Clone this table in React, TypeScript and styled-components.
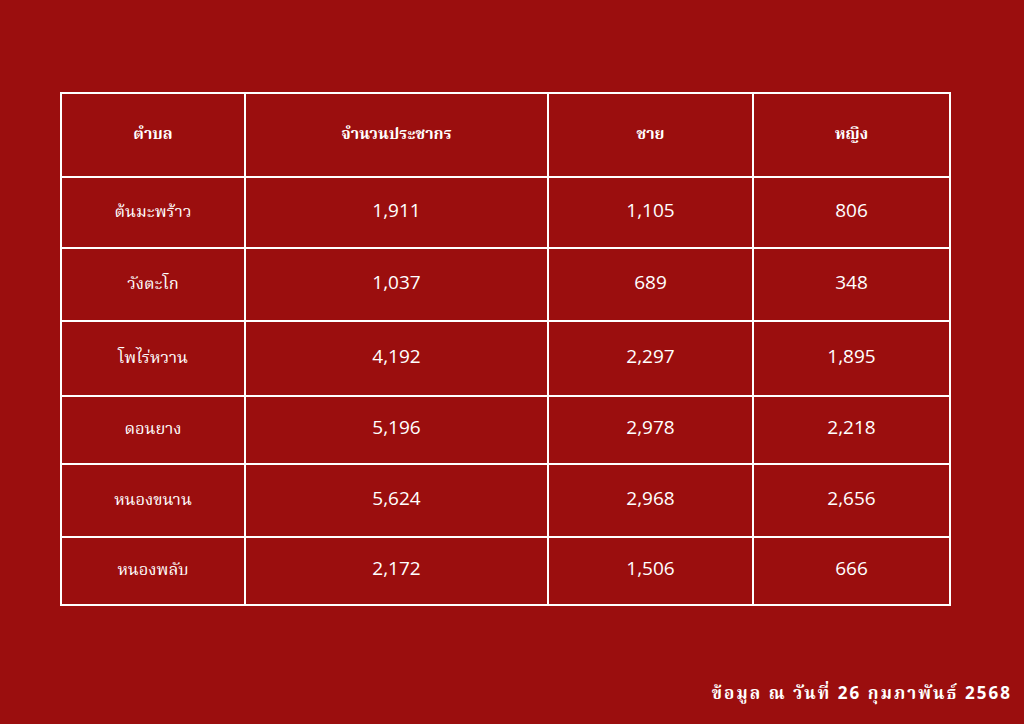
import React from 'react'
import styled, { createGlobalStyle } from 'styled-components'

const GlobalStyle = createGlobalStyle`
  html, body {
    margin: 0;
    padding: 0;
    background: #9b0e0e;
  }
  body {
    font-family: "Open Sans", "Noto Serif Thai", "Norasi", "Loma", "Garuda", "Tlwg Typo", "Noto Sans", serif;
    color: #ffffff;
  }
`

interface Row {
  name: string
  total: string
  male: string
  female: string
  height: number
}

const rows: Row[] = [
  { name: 'ต้นมะพร้าว', total: '1,911', male: '1,105', female: '806', height: 71 },
  { name: 'วังตะโก', total: '1,037', male: '689', female: '348', height: 73 },
  { name: 'โพไร่หวาน', total: '4,192', male: '2,297', female: '1,895', height: 75 },
  { name: 'ดอนยาง', total: '5,196', male: '2,978', female: '2,218', height: 68 },
  { name: 'หนองขนาน', total: '5,624', male: '2,968', female: '2,656', height: 73 },
  { name: 'หนองพลับ', total: '2,172', male: '1,506', female: '666', height: 68 },
]

const Page = styled.div`
  width: 1024px;
  height: 724px;
  box-sizing: border-box;
  padding: 92px 0 0 60px;
  display: flex;
  flex-direction: column;
`

const Table = styled.table`
  width: 881px;
  border-collapse: collapse;
  table-layout: fixed;
`

const HeadCell = styled.th<{ $w: number }>`
  width: ${p => p.$w}px;
  height: 82px;
  border: 2px solid #ffffff;
  font-size: 16px;
  font-weight: 700;
  text-align: center;
  vertical-align: middle;
  padding: 0;
`

const BodyRow = styled.tr<{ $h: number }>`
  height: ${p => p.$h}px;
`

const Cell = styled.td<{ $name?: boolean }>`
  border: 2px solid #ffffff;
  font-size: ${p => (p.$name ? '16.5px' : '19px')};
  text-align: center;
  vertical-align: middle;
  padding: ${p => (p.$name ? '0 0 1px' : '0 0 6px')};
`

const Footer = styled.div`
  margin-top: auto;
  align-self: flex-end;
  padding: 0 12px 16px 0;
  font-size: 17px;
  font-weight: 700;
  letter-spacing: 2.05px;
`

const App = () => (
  <>
    <GlobalStyle />
    <Page>
      <Table>
        <thead>
          <tr>
            <HeadCell $w={182}>ตำบล</HeadCell>
            <HeadCell $w={301}>จำนวนประชากร</HeadCell>
            <HeadCell $w={203}>ชาย</HeadCell>
            <HeadCell $w={195}>หญิง</HeadCell>
          </tr>
        </thead>
        <tbody>
          {rows.map(r => (
            <BodyRow key={r.name} $h={r.height}>
              <Cell $name>{r.name}</Cell>
              <Cell>{r.total}</Cell>
              <Cell>{r.male}</Cell>
              <Cell>{r.female}</Cell>
            </BodyRow>
          ))}
        </tbody>
      </Table>
      <Footer>ข้อมูล ณ วันที่ 26 กุมภาพันธ์ 2568</Footer>
    </Page>
  </>
)

export default App
